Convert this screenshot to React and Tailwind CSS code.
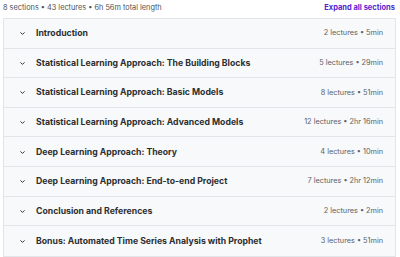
import React from 'react';

const sections = [
  { title: 'Introduction', meta: '2 lectures • 5min' },
  { title: 'Statistical Learning Approach: The Building Blocks', meta: '5 lectures • 29min' },
  { title: 'Statistical Learning Approach: Basic Models', meta: '8 lectures • 51min' },
  { title: 'Statistical Learning Approach: Advanced Models', meta: '12 lectures • 2hr 16min' },
  { title: 'Deep Learning Approach: Theory', meta: '4 lectures • 10min' },
  { title: 'Deep Learning Approach: End-to-end Project', meta: '7 lectures • 2hr 12min' },
  { title: 'Conclusion and References', meta: '2 lectures • 2min' },
  { title: 'Bonus: Automated Time Series Analysis with Prophet', meta: '3 lectures • 51min' },
];

const Chevron = () => (
  <svg width="7" height="7" viewBox="0 0 10 10" fill="none" className="shrink-0">
    <path d="M2.5 3.8 L5 6.3 L7.5 3.8" stroke="#2d2f31" strokeWidth="1.4" strokeLinecap="round" strokeLinejoin="round" />
  </svg>
);

const App = () => {
  return (
    <div className="w-[400px] h-[257px] bg-white overflow-hidden font-['Inter',sans-serif]">
      <div className="flex justify-between items-center h-[15px] pl-[3px] pr-[5px] pt-[1px]">
        <span className="text-[7.35px] text-[#4b4f53]">8 sections • 43 lectures • 6h 56m total length</span>
        <span className="text-[7.5px] font-bold text-[#5624d0]">Expand all sections</span>
      </div>
      <div className="ml-[3px] mr-[4px] mt-[3px] border border-[#e2e6e9]">
        {sections.map((s, i) => (
          <div
            key={i}
            className="h-[29.6px] flex items-center bg-[#f7f9fa] border-b border-[#e2e6e9] last:border-b-0 pl-[15px] pr-[12px] pt-[1px]"
          >
            <Chevron />
            <span className="ml-[10px] text-[8.7px] font-bold text-[#2d2f31] flex-1">{s.title}</span>
            <span className="text-[7.3px] text-[#5c6165]">{s.meta}</span>
          </div>
        ))}
      </div>
    </div>
  );
};

export default App;
